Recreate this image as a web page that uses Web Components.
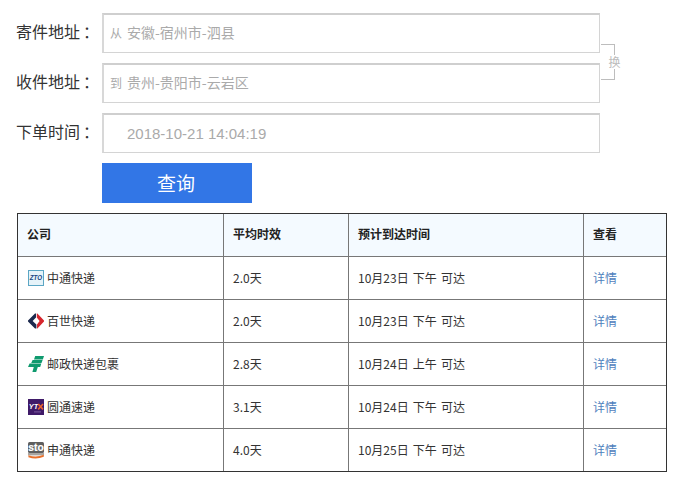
<!DOCTYPE html>
<html lang="zh">
<head>
<meta charset="utf-8">
<title>快递查询</title>
<style>
    html, body { margin: 0; background: #fff; }
    body { font-family: "Noto Sans CJK SC", "Liberation Sans", sans-serif; }
</style>
</head>
<body>
<express-page>
    <query-form>
        <form-row label="寄件地址" prefix="从" value="安徽-宿州市-泗县"></form-row>
        <form-row label="收件地址" prefix="到" value="贵州-贵阳市-云岩区"></form-row>
        <form-row label="下单时间" date value="2018-10-21 14:04:19"></form-row>
    </query-form>
    <result-table>
        <result-row company="中通快递" logo="zto" avg="2.0天" eta="10月23日 下午 可达"></result-row>
        <result-row company="百世快递" logo="best" avg="2.0天" eta="10月23日 下午 可达"></result-row>
        <result-row company="邮政快递包裹" logo="post" avg="2.8天" eta="10月24日 上午 可达"></result-row>
        <result-row company="圆通速递" logo="yto" avg="3.1天" eta="10月24日 下午 可达"></result-row>
        <result-row company="申通快递" logo="sto" avg="4.0天" eta="10月25日 下午 可达"></result-row>
    </result-table>
</express-page>

<script>
const LOGOS = {
    zto: `<svg width="16" height="16" viewBox="0 0 16 16">
        <rect x="0.5" y="0.5" width="15" height="15" fill="#e6f3f9" stroke="#5ba6c4"/>
        <text x="1.8" y="10.4" font-family="Liberation Sans" font-size="6.6" font-weight="700" font-style="italic" fill="#17457f" textLength="12.4" lengthAdjust="spacingAndGlyphs">ZTO</text>
    </svg>`,
    best: `<svg width="16" height="16" viewBox="0 0 16 16">
        <path d="M7 0.4 H8 V4.6 L4.6 8 L8.4 11.6 V15.6 H7 L0 8.4 V7.4 Z" fill="#1c2a4e"/>
        <path d="M8.8 0.4 H9.4 L16 7.4 V8.6 L9.4 15.6 H9 V11.4 L11.6 8 L8.8 4.6 Z" fill="#d6262e"/>
    </svg>`,
    post: `<svg width="16" height="16" viewBox="0 0 16 16">
        <path d="M7.2 0 H16 L14.8 3.4 H6 Z" fill="#0f9a6e"/>
        <path d="M4.6 3.9 H14.6 L13.5 7.1 H3.2 Z" fill="#0f9a6e"/>
        <path d="M1.6 7.6 H13.3 L12.2 11 H9.8 L8.2 16 H4.4 L5.8 11 H0 Z" fill="#0f9a6e"/>
    </svg>`,
    yto: `<svg width="16" height="16" viewBox="0 0 16 16">
        <rect width="16" height="16" fill="#3f1a68"/>
        <text x="0.8" y="10" font-family="Liberation Sans" font-size="7" font-weight="700" font-style="italic" fill="#fff" textLength="9.4" lengthAdjust="spacingAndGlyphs">YT</text>
        <path d="M10.2 5 L15 10.4 M15 5 L10.2 10.4" stroke="#e8602c" stroke-width="1.6"/>
        <rect x="6" y="12.4" width="7" height="1" fill="#7d5ba0"/>
    </svg>`,
    sto: `<svg width="16" height="17" viewBox="0 0 16 17">
        <rect width="16" height="11" rx="1.5" fill="#5f5f5f"/>
        <rect y="11" width="16" height="2.4" fill="#a8a5a1"/>
        <text x="8" y="9" text-anchor="middle" font-family="Liberation Sans" font-size="10.6" font-weight="700" fill="#fff" stroke="#fff" stroke-width="0.2" textLength="15.4" lengthAdjust="spacingAndGlyphs">sto</text>
        <path d="M0.4 13.2 Q8 16.2 15.8 12.8 L15.8 14.8 Q8 18 0.4 15.2 Z" fill="#e8702a"/>
    </svg>`
};

class ExpressPage extends HTMLElement {
    constructor() {
        super();
        this.attachShadow({mode: 'open'});
        this.shadowRoot.innerHTML = `
            <style>
                :host {
                    display: flex;
                    flex-direction: column;
                    gap: 10px;
                    width: 673px;
                    height: 477px;
                    box-sizing: border-box;
                    padding: 13px 0 0 16px;
                    overflow: hidden;
                }
            </style>
            <slot></slot>
        `;
    }
}

class QueryForm extends HTMLElement {
    constructor() {
        super();
        this.attachShadow({mode: 'open'});
        this.shadowRoot.innerHTML = `
            <style>
                :host {
                    display: flex;
                    flex-direction: column;
                    gap: 10px;
                    position: relative;
                    width: 620px;
                }
                button {
                    width: 150px;
                    height: 40px;
                    margin-left: 86px;
                    border: 0;
                    padding: 0 2px 2px 0;
                    background: #3276e6;
                    color: #fff;
                    font: 19px "Noto Sans CJK SC", "Liberation Sans", sans-serif;
                }
                .swap {
                    position: absolute;
                    left: 585px;
                    top: 31px;
                    width: 13px;
                    height: 34px;
                    border: 1px solid #bdbdbd;
                    border-left: 0;
                }
                .swap span {
                    position: absolute;
                    left: 7px;
                    top: 10px;
                    width: 13px;
                    background: #fff;
                    color: #bbb;
                    font-size: 12px;
                    line-height: 14px;
                    text-align: center;
                }
            </style>
            <slot></slot>
            <button type="button">查询</button>
            <div class="swap"><span>换</span></div>
        `;
    }
}

class FormRow extends HTMLElement {
    constructor() {
        super();
        this.attachShadow({mode: 'open'});
        const prefix = this.getAttribute('prefix') || '';
        this.shadowRoot.innerHTML = `
            <style>
                :host {
                    display: flex;
                    align-items: center;
                    height: 40px;
                }
                .label {
                    width: 86px;
                    flex: none;
                    padding-bottom: 5px;
                    color: #333;
                    font-size: 16px;
                    white-space: nowrap;
                }
                .label i {
                    font-style: normal;
                    font-family: "Noto Sans CJK TC", sans-serif;
                    margin-left: 3px;
                }
                .box {
                    width: 498px;
                    height: 40px;
                    box-sizing: border-box;
                    display: flex;
                    align-items: center;
                    padding-bottom: 3px;
                    border: 1px solid #d4d4d4;
                    border-top: 2px solid #cfcfcf;
                    border-left: 2px solid #d8d8d8;
                    color: #aaa;
                    font-size: 14px;
                }
                .prefix {
                    width: 17px;
                    margin-left: 6px;
                    flex: none;
                    font-size: 12px;
                }
                :host([date]) .value {
                    margin-top: 2px;
                    font: 15px "Liberation Sans", sans-serif;
                }
            </style>
            <span class="label">${this.getAttribute('label')}<i>：</i></span>
            <div class="box">
                <span class="prefix">${prefix}</span>
                <span class="value">${this.getAttribute('value')}</span>
            </div>
        `;
    }
}

const COLUMNS = '205px 125px 235px 83px';

class ResultTable extends HTMLElement {
    constructor() {
        super();
        this.attachShadow({mode: 'open'});
        this.shadowRoot.innerHTML = `
            <style>
                :host {
                    display: block;
                    width: 650px;
                    margin-left: 1px;
                    box-sizing: border-box;
                    border: 1px solid #333;
                    color: #333;
                    font-size: 12px;
                }
                .head {
                    display: grid;
                    grid-template-columns: ${COLUMNS};
                    height: 42px;
                    background: #f4faff;
                    font-weight: 700;
                    color: #222;
                }
                .head span {
                    display: flex;
                    align-items: center;
                    padding: 0 0 3px 9px;
                    border-left: 1px solid #777;
                }
                .head span:first-child { border-left: 0; }
            </style>
            <div class="head">
                <span>公司</span><span>平均时效</span><span>预计到达时间</span><span>查看</span>
            </div>
            <slot></slot>
        `;
    }
}

class ResultRow extends HTMLElement {
    constructor() {
        super();
        this.attachShadow({mode: 'open'});
        this.shadowRoot.innerHTML = `
            <style>
                :host {
                    display: grid;
                    grid-template-columns: ${COLUMNS};
                    height: 43px;
                    box-sizing: border-box;
                    border-top: 1px solid #777;
                }
                div {
                    display: flex;
                    align-items: center;
                    padding-left: 9px;
                    padding-bottom: 2px;
                    border-left: 1px solid #777;
                    white-space: nowrap;
                }
                .name { border-left: 0; padding: 0 0 0 10px; gap: 3px; }
                .name span { padding-bottom: 2px; }
                .eta { word-spacing: 1.5px; }
                svg { display: block; flex: none; }
                a { color: #4f81bd; text-decoration: none; }
            </style>
            <div class="name">${LOGOS[this.getAttribute('logo')]}<span>${this.getAttribute('company')}</span></div>
            <div class="avg">${this.getAttribute('avg')}</div>
            <div class="eta">${this.getAttribute('eta')}</div>
            <div><a href="#">详情</a></div>
        `;
    }
}

customElements.define('express-page', ExpressPage);
customElements.define('query-form', QueryForm);
customElements.define('form-row', FormRow);
customElements.define('result-table', ResultTable);
customElements.define('result-row', ResultRow);
</script>
</body>
</html>
